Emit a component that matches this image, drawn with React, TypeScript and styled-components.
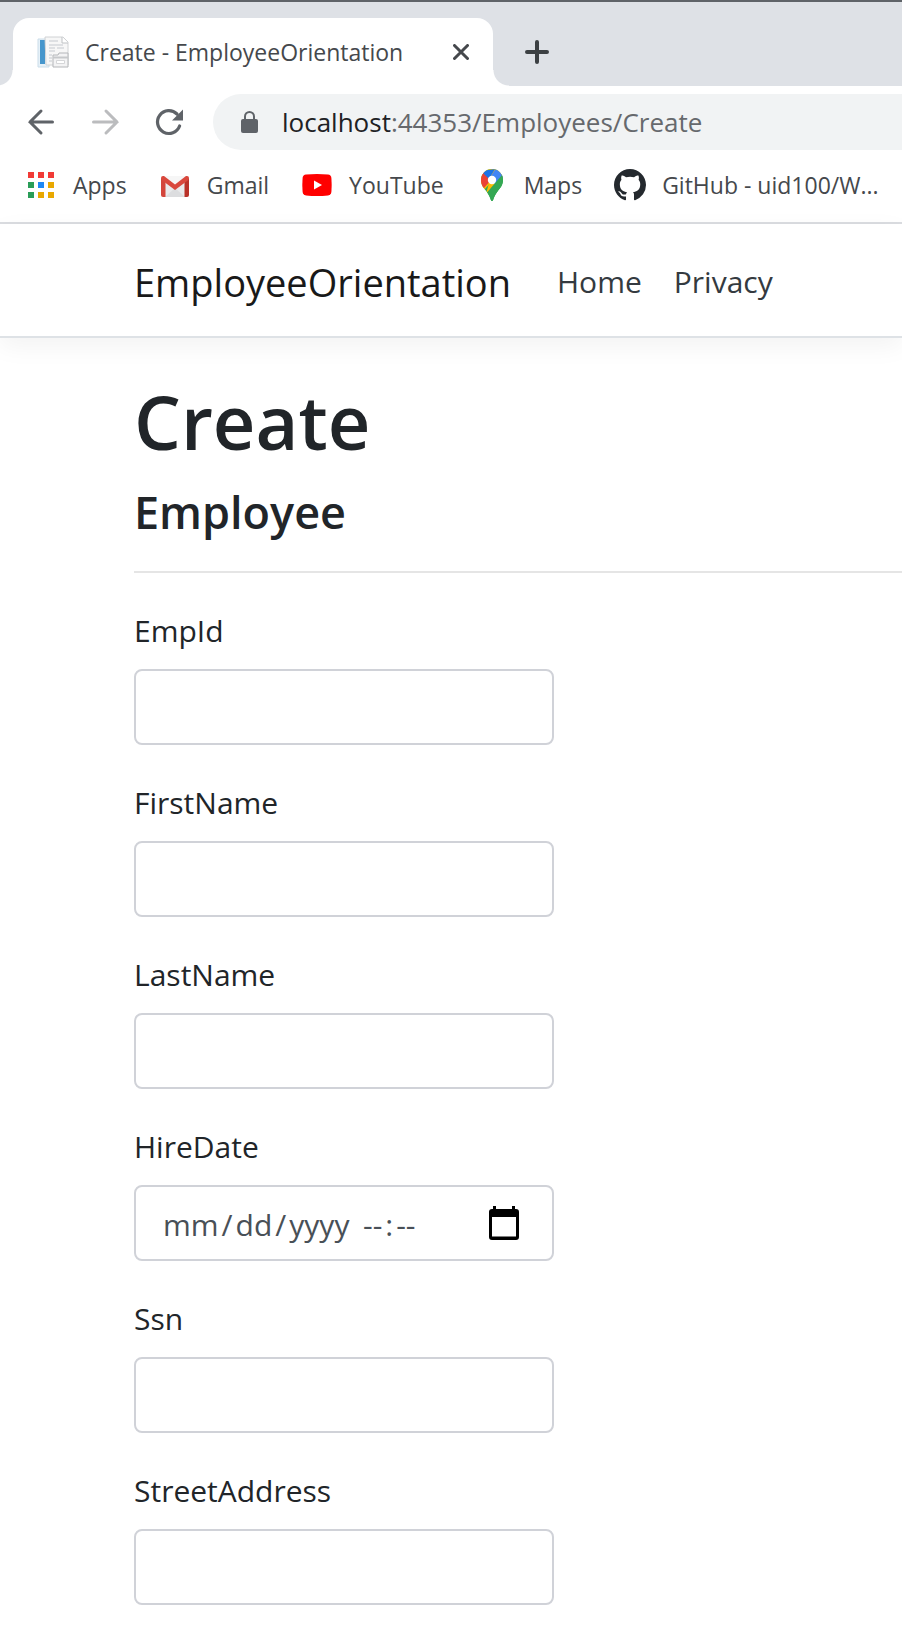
import React, { useRef } from "react";
import styled, { createGlobalStyle } from "styled-components";

const GlobalStyle = createGlobalStyle`
  *, *::before, *::after { box-sizing: border-box; }
  body {
    margin: 0;
    background: #fff;
    color: #212529;
    font-family: "Segoe UI", "Open Sans", "Noto Sans", sans-serif;
    font-size: 30px;
    line-height: 48px;
    overflow-x: hidden;
  }
  a { color: inherit; text-decoration: none; }
  button { border: 0; padding: 0; background: none; font: inherit; color: inherit; cursor: pointer; }
  svg { display: block; flex: none; }
`;

/* ---------- browser chrome ---------- */

const TabStrip = styled.div`
  display: flex;
  align-items: flex-end;
  height: 86px;
  padding-left: 13px;
  border-top: 2px solid #5f6368;
  background: #dee1e6;
`;

const Tab = styled.div`
  position: relative;
  display: flex;
  align-items: center;
  width: 480px;
  height: 68px;
  padding: 0 24px;
  border-radius: 16px 16px 0 0;
  background: #fff;
  &::before,
  &::after {
    content: "";
    position: absolute;
    bottom: 0;
    width: 16px;
    height: 16px;
  }
  &::before {
    right: 100%;
    background: radial-gradient(circle at 0 0, #dee1e6 15px, #fff 16px);
  }
  &::after {
    left: 100%;
    background: radial-gradient(circle at 100% 0, #dee1e6 15px, #fff 16px);
  }
`;

const TabTitle = styled.span`
  flex: 1;
  margin-left: 16px;
  color: #45484c;
  font-size: 23px;
  line-height: 32px;
  white-space: nowrap;
`;

const NewTabButton = styled.button`
  align-self: center;
  margin-left: 32px;
  padding-top: 16px;
`;

const Toolbar = styled.div`
  display: flex;
  align-items: center;
  gap: 28px;
  height: 72px;
  padding-left: 25px;
`;

const ToolGroup = styled.div`
  display: flex;
  gap: 32px;
`;

const ToolButton = styled.button`
  width: 32px;
  height: 32px;
`;

const AddressBar = styled.div`
  display: flex;
  align-items: center;
  flex: 1;
  gap: 24px;
  height: 56px;
  margin-right: -32px;
  padding-left: 28px;
  border-radius: 28px;
  background: #f1f3f4;
  color: #66696d;
  font-size: 26px;
  line-height: 32px;
  white-space: nowrap;
`;

const Host = styled.span`
  color: #202124;
`;

const BookmarkBar = styled.nav`
  display: flex;
  gap: 32px;
  height: 66px;
  padding: 11px 0 0 25px;
  border-bottom: 2px solid #dadce0;
  color: #45484c;
  font-size: 23px;
  line-height: 32px;
`;

const Bookmark = styled.a`
  display: flex;
  gap: 16px;
  height: 32px;
  white-space: nowrap;
`;

/* ---------- site ---------- */

const SiteHeader = styled.header`
  display: flex;
  align-items: center;
  height: 114px;
  padding: 4px 0 0 134px;
  border-bottom: 2px solid #dee2e6;
  box-shadow: 0 8px 24px rgba(0, 0, 0, 0.05);
`;

const Brand = styled.a`
  margin-right: 30px;
  color: #191919;
  font-size: 38px;
`;

const NavLink = styled.a`
  padding: 0 16px;
  color: #343a40;
`;

const Main = styled.main`
  padding: 36px 0 32px 134px;
`;

const PageTitle = styled.h1`
  margin: 0 0 14px;
  font-size: 74px;
  font-weight: 600;
  line-height: 96px;
`;

const SectionTitle = styled.h4`
  margin: 0;
  font-size: 45px;
  font-weight: 600;
  line-height: 56px;
`;

const Divider = styled.hr`
  margin: 31px 0 32px;
  border: 0;
  border-top: 2px solid #e5e5e5;
`;

const FormGroup = styled.div`
  max-width: 420px;
  margin-bottom: 32px;
`;

const Label = styled.label`
  display: block;
  margin-bottom: 12px;
  line-height: 52px;
`;

const InputBox = styled.div`
  display: flex;
  align-items: center;
  height: 76px;
  border: 2px solid #d0d2d8;
  border-radius: 8px;
`;

const Input = styled.input`
  flex: 1;
  min-width: 0;
  height: 100%;
  padding: 0 24px;
  border: 0;
  outline: 0;
  background: none;
  color: #495057;
  font: inherit;
`;

const DateTimeBox = styled(InputBox)`
  padding: 4px 32px 0 24px;
`;

const DatePart = styled.input<{ $width: number }>`
  flex: none;
  width: ${(p) => p.$width}px;
  padding: 0;
  border: 0;
  outline: 0;
  background: none;
  color: #495057;
  font: inherit;
  &::-webkit-calendar-picker-indicator,
  &::-webkit-datetime-edit-ampm-field { display: none; }
  &::-webkit-datetime-edit-month-field,
  &::-webkit-datetime-edit-day-field,
  &::-webkit-datetime-edit-year-field,
  &::-webkit-datetime-edit-hour-field,
  &::-webkit-datetime-edit-minute-field { padding: 0 3px; }
`;

const PickerButton = styled.button`
  margin: 0 0 4px auto;
`;

/* ---------- icons ---------- */

const Favicon = () => (
  <svg width="32" height="32" viewBox="0 0 32 32">
    <path d="M1 3h11v28H1z" fill="#e6f1f8" stroke="#cbdde9" />
    <path d="M3 4h5v24H3z" fill="#4696cc" />
    <path d="M8 1h18l5 5v23H9z" fill="#f7f7f7" stroke="#d0d2d4" />
    <path d="M25 1v6h6" fill="#fff" stroke="#bfc2c5" />
    <path d="M12 5h9M12 9h14M12 12h6M20 12h7M12 15h6M12 19h3M12 22h3M12 25h3" stroke="#d6d9dd" strokeWidth="1.5" />
    <path d="M16 31V19h5l1-2h9v14z" fill="#f3f3f4" stroke="#b4b6b9" />
    <path d="M16 21.500h15" stroke="#c6c8cb" strokeWidth="2" />
    <path d="M19.500 24.500h8v3h-8z" fill="#fff" stroke="#d5d6d8" />
  </svg>
);

const CloseIcon = () => (
  <svg width="16" height="16" viewBox="0 0 16 16" fill="none" stroke="#45484c" strokeWidth="3" strokeLinecap="round">
    <path d="M1.500 1.500l13 13M14.500 1.500l-13 13" />
  </svg>
);

const PlusIcon = () => (
  <svg width="24" height="24" viewBox="0 0 24 24" fill="none" stroke="#3c4043" strokeWidth="4" strokeLinecap="round">
    <path d="M12 2v20M2 12h20" />
  </svg>
);

const BackIcon = () => (
  <svg width="32" height="32" viewBox="0 0 32 32" fill="none" stroke="#5f6368" strokeWidth="3" strokeLinecap="round">
    <path d="M27.500 16H5M16 5L5 16l11 11" />
  </svg>
);

const ForwardIcon = () => (
  <svg width="32" height="32" viewBox="0 0 32 32" fill="none" stroke="#bbbcbe" strokeWidth="3" strokeLinecap="round">
    <path d="M4.500 16H28M17 5l11 11-11 11" />
  </svg>
);

const ReloadIcon = () => (
  <svg width="32" height="32" viewBox="0 0 32 32">
    <path d="M26.600 20A11.400 11.400 0 1 1 24 8" fill="none" stroke="#5f6368" strokeWidth="3.200" strokeLinecap="round" />
    <path d="M30 3.500V14.500H19z" fill="#5f6368" />
  </svg>
);

const LockIcon = () => (
  <svg width="17" height="22" viewBox="0 0 17 22">
    <rect x="0" y="8" width="17" height="14" rx="2" fill="#5f6368" />
    <path d="M4 9V5.500a4.500 4.500 0 0 1 9 0V9" fill="none" stroke="#5f6368" strokeWidth="2" />
  </svg>
);

const appColours = ["#f13b36", "#f13b36", "#f13b36", "#2a9d58", "#1e88f5", "#e9a800", "#2a9d58", "#e9a800", "#e9a800"];

const AppsIcon = () => (
  <svg width="32" height="32" viewBox="0 0 32 32">
    {appColours.map((c, i) => (
      <rect key={i} x={3 + (i % 3) * 10} y={3 + Math.floor(i / 3) * 10} width="6" height="6" fill={c} />
    ))}
  </svg>
);

const GmailIcon = () => (
  <svg width="32" height="32" viewBox="0 0 32 32">
    <path d="M4 7h24v21H4z" fill="#e9eaeb" />
    <path d="M6 28l10-9 10 9z" fill="#dcdddf" />
    <path d="M4 7h24L16 17z" fill="#f6f6f6" />
    <path d="M2 9v17q0 2 2 2h2.500V12z" fill="#d3453b" />
    <path d="M30 9v17q0 2-2 2h-2.500V12z" fill="#b93229" />
    <path d="M2 9q0-2 2-2h1l11 8.500L27 7h1q2 0 2 2 0 1.500-1 2.300L16 21 3 11.300Q2 10.500 2 9z" fill="#d9483d" />
  </svg>
);

const YouTubeIcon = () => (
  <svg width="32" height="32" viewBox="0 0 32 32">
    <path d="M5 5.600Q16 4.400 27 5.600q3 .4 3.400 3.400.6 7 0 14-.4 3-3.400 3.400-11 1.200-22 0Q2 26 1.600 23q-.6-7 0-14Q2 6 5 5.600z" fill="#f00" />
    <path d="M13 11.500v9l8-4.500z" fill="#fff" />
  </svg>
);

const MapsIcon = () => (
  <svg width="32" height="32" viewBox="0 0 32 32">
    <defs>
      <clipPath id="pin">
        <path d="M16 0A11 11 0 0 0 5 11c0 5 2.500 7.500 5.500 11.500 2 2.800 3.300 5 4.300 8.300.4 1.600 2 1.600 2.400 0 1-3.300 2.300-5.500 4.300-8.300C24.500 18.500 27 16 27 11A11 11 0 0 0 16 0z" />
      </clipPath>
    </defs>
    <g clipPath="url(#pin)">
      <path d="M0 0h32v32H0z" fill="#34a853" />
      <path d="M8 21L28-1H0v26z" fill="#fbbc04" />
      <path d="M0 13L8 19 16 10 8 2 0 4z" fill="#ea4335" />
      <path d="M13 14L27 0v10L10 25z" fill="#fbbc04" />
      <path d="M5 2l8 8 6-10z" fill="#1a73e8" />
      <path d="M19.500 0L32 0v6L19 15l-6-5z" fill="#4285f4" />
      <path d="M26 6L8 27l8 6 16-18V0z" fill="#34a853" />
    </g>
    <circle cx="16" cy="11" r="4.200" fill="#fff" />
  </svg>
);

const GitHubIcon = () => (
  <svg width="32" height="32" viewBox="0 0 16 16">
    <path
      fill="#24292e"
      d="M8 0C3.580 0 0 3.580 0 8c0 3.540 2.290 6.530 5.470 7.590.4.070.55-.17.55-.38 0-.19-.01-.82-.01-1.490-2.010.37-2.530-.49-2.690-.94-.09-.23-.48-.94-.82-1.130-.28-.15-.68-.52-.01-.53.63-.01 1.080.58 1.230.82.72 1.210 1.870.87 2.330.66.07-.52.28-.87.51-1.070-1.780-.2-3.640-.89-3.640-3.950 0-.87.31-1.590.82-2.150-.08-.2-.36-1.020.08-2.120 0 0 .67-.21 2.200.82.64-.18 1.320-.27 2-.27s1.360.09 2 .27c1.530-1.040 2.200-.82 2.200-.82.44 1.100.16 1.920.08 2.120.51.56.82 1.270.82 2.150 0 3.070-1.870 3.750-3.650 3.950.29.25.54.73.54 1.480 0 1.070-.01 1.930-.01 2.200 0 .21.15.46.55.38A8.010 8.010 0 0 0 16 8c0-4.420-3.580-8-8-8z"
    />
  </svg>
);

const CalendarIcon = () => (
  <svg width="32" height="34" viewBox="0 0 32 34">
    <path
      fill="#000"
      fillRule="evenodd"
      d="M5 0h3v3h16V0h3v3h1q3 0 3 3v25q0 3-3 3H4q-3 0-3-3V6q0-3 3-3h1zM4 11v19.500h24V11z"
    />
  </svg>
);

/* ---------- page ---------- */

const bookmarks = [
  { name: "Apps", Icon: AppsIcon },
  { name: "Gmail", Icon: GmailIcon },
  { name: "YouTube", Icon: YouTubeIcon },
  { name: "Maps", Icon: MapsIcon },
  { name: "GitHub - uid100/W...", Icon: GitHubIcon },
];

const fields = [
  { name: "EmpId" },
  { name: "FirstName" },
  { name: "LastName" },
  { name: "HireDate", date: true },
  { name: "Ssn" },
  { name: "StreetAddress" },
];

function DateTimeField({ name }: { name: string }) {
  const dateRef = useRef<HTMLInputElement>(null);
  return (
    <DateTimeBox>
      <DatePart $width={200} ref={dateRef} id={name} name={name} type="date" />
      <DatePart $width={96} type="time" name={name + "Time"} aria-label={name + " time"} />
      <PickerButton type="button" aria-label="Choose date" onClick={() => dateRef.current?.showPicker()}>
        <CalendarIcon />
      </PickerButton>
    </DateTimeBox>
  );
}

export default function App() {
  return (
    <>
      <GlobalStyle />
      <TabStrip>
        <Tab>
          <Favicon />
          <TabTitle>Create - EmployeeOrientation</TabTitle>
          <button aria-label="Close tab"><CloseIcon /></button>
        </Tab>
        <NewTabButton aria-label="New tab"><PlusIcon /></NewTabButton>
      </TabStrip>
      <Toolbar>
        <ToolGroup>
          <ToolButton aria-label="Back"><BackIcon /></ToolButton>
          <ToolButton aria-label="Forward"><ForwardIcon /></ToolButton>
          <ToolButton aria-label="Reload"><ReloadIcon /></ToolButton>
        </ToolGroup>
        <AddressBar>
          <LockIcon />
          <span><Host>localhost</Host>:44353/Employees/Create</span>
        </AddressBar>
      </Toolbar>
      <BookmarkBar>
        {bookmarks.map(({ name, Icon }) => (
          <Bookmark key={name} href="#"><Icon />{name}</Bookmark>
        ))}
      </BookmarkBar>

      <SiteHeader>
        <Brand href="#">EmployeeOrientation</Brand>
        <NavLink href="#">Home</NavLink>
        <NavLink href="#">Privacy</NavLink>
      </SiteHeader>
      <Main>
        <PageTitle>Create</PageTitle>
        <SectionTitle>Employee</SectionTitle>
        <Divider />
        <form>
          {fields.map(({ name, date }) => (
            <FormGroup key={name}>
              <Label htmlFor={name}>{name}</Label>
              {date ? (
                <DateTimeField name={name} />
              ) : (
                <InputBox>
                  <Input id={name} name={name} type="text" />
                </InputBox>
              )}
            </FormGroup>
          ))}
        </form>
      </Main>
    </>
  );
}
